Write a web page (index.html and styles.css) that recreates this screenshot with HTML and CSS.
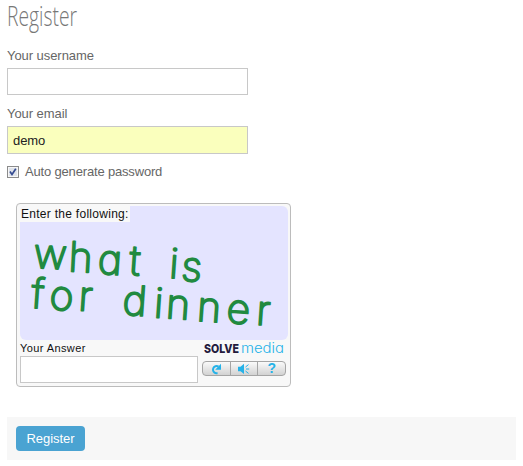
FILE: index.html
```html
<!DOCTYPE html>
<html lang="en">
<head>
<meta charset="utf-8">
<title>Register</title>
<link rel="stylesheet" href="styles.css">
</head>
<body>
<form class="register">
  <h1 class="title"><svg width="80" height="40" viewBox="0 0 80 40"><text x="0" y="26" textLength="70" lengthAdjust="spacingAndGlyphs">Register</text></svg></h1>
  <label class="label" for="username">Your username</label>
  <input class="field" id="username" type="text">
  <label class="label" for="email">Your email</label>
  <input class="field filled" id="email" type="text" value="demo">
  <label class="auto">
    <svg class="check" width="12" height="12" viewBox="0 0 12 12"><rect x=".5" y=".5" width="11" height="11" fill="#f7f7f7" stroke="#8b8b8b"/><rect x="2" y="2" width="8" height="8" fill="#dfe3ea"/><path d="M3 5.5 5 8.4 8.8 2.8" fill="none" stroke="#354b91" stroke-width="1.7"/></svg>
    <span>Auto generate password</span>
  </label>
  <section class="captcha">
    <div class="puzzle">
      <span class="prompt">Enter the following:</span>
      <svg class="phrase" width="268" height="134" viewBox="20 206 268 134">
        <g transform="translate(1 -.5) scale(1.05 1.06)">
          <text x="30.5 63.8 91.5 121.5" y="253 256.3 258.5 259.8" rotate="3 3 4 4">what</text>
          <text x="159.5 171" y="262.5 265" rotate="4">is</text>
          <text x="28 45.5 73" y="290.7 292.2 293.2" rotate="4">for</text>
          <text x="115 145 156.5 186 214 242.5" y="297.2 299.8 300.6 303 305 306.5" rotate="4">dinner</text>
        </g>
      </svg>
    </div>
    <div class="bottom">
      <div class="answer">
        <label for="answer">Your Answer</label>
        <input id="answer" type="text">
      </div>
      <div class="tools">
        <svg class="brand" width="82" height="16" viewBox="0 0 82 16"><text class="solve" x="2" y="13" textLength="35" lengthAdjust="spacingAndGlyphs">SOLVE</text><text class="media" x="39" y="13" textLength="43" lengthAdjust="spacingAndGlyphs">media</text></svg>
        <div class="buttons">
          <button type="button" aria-label="Refresh"><svg width="14" height="12" viewBox="0 0 14 12"><path d="M8.6 10.2H7A3.6 3.6 0 1 1 9.5 3.6" fill="none" stroke="#25b2e8" stroke-width="2"/><path d="M12 .8V6.8H6.2Z" fill="#25b2e8"/></svg></button>
          <button type="button" aria-label="Audio"><svg width="14" height="12" viewBox="0 0 14 12"><path d="M1 3.7H3.5L7 .8V11L3.5 8.2H1Z" fill="#25b2e8"/><path d="M8.5 4 11.5 1.6M9 6h3.2M8.5 8l3 2.4" fill="none" stroke="#25b2e8" stroke-width="1"/></svg></button>
          <button type="button" class="help">?</button>
        </div>
      </div>
    </div>
  </section>
  <div class="actions"><button class="submit" type="button">Register</button></div>
</form>
</body>
</html>
```
FILE: styles.css
```css
* { box-sizing: border-box; }
body { margin: 0; background: #fff; color: #666; font: 13px/16px "Liberation Sans", Arial, sans-serif; }
.register { display: flex; flex-direction: column; width: 516px; padding-left: 7px; }
.title { margin: 0; height: 48px; }
.title svg { display: block; overflow: visible; }
.title text { font: 300 28px "Open Sans", sans-serif; fill: #777; }
.label { height: 20px; letter-spacing: -.06px; }
.field { width: 241px; height: 27px; margin: 0 0 11px; padding: 0 5px; border: 1px solid #c8c8c8; background: #fff; color: #222; font: 13px "Liberation Sans", Arial, sans-serif; letter-spacing: -.1px; }
.filled { height: 28px; background: #faffbd; margin-bottom: 10px; }
.auto { display: flex; align-items: center; gap: 6px; height: 16px; letter-spacing: -.17px; }
.check { display: block; }
.captcha { width: 275px; height: 184px; margin: 23px 0 0 9px; padding: 2px 3px 3px; border: 1px solid #bcbcbc; border-radius: 4px; background: #f8f8f8; color: #111; }
.puzzle { display: grid; width: 268px; height: 134px; border-radius: 6px; background: #e4e4ff; overflow: hidden; }
.prompt, .phrase { grid-area: 1 / 1; }
.prompt { align-self: start; justify-self: start; width: 110px; height: 16px; padding-left: 1px; background: #f8f8f8; font-size: 12px; line-height: 16px; white-space: nowrap; letter-spacing: .28px; }
.phrase text { font: 200 39px Inter, sans-serif; font-feature-settings: "cv11"; fill: #218a40; stroke: #218a40; stroke-width: 1.7px; stroke-linejoin: round; }
.bottom { display: flex; gap: 4px; }
.answer { width: 178px; font-size: 11px; }
.answer label { display: block; height: 16px; line-height: 16px; letter-spacing: .4px; }
.answer input { display: block; width: 178px; height: 27px; margin: 0; border: 1px solid #c8c8c8; background: #fff; }
.tools { width: 84px; }
.brand { display: block; height: 16px; }
.solve { font: 800 12px Inter, sans-serif; fill: #241b3d; }
.media { font: 300 14px Inter, sans-serif; font-feature-settings: "cv11"; fill: #25b2e8; }
.buttons { display: flex; width: 84px; height: 15px; margin-top: 5px; border: 1px solid #a5a5a5; border-radius: 4px; background: linear-gradient(#fafafa, #d2d2d2); }
.buttons button { display: flex; flex: 1; align-items: center; justify-content: center; padding: 0; border: 0; background: none; }
.buttons button + button { border-left: 1px solid #a5a5a5; }
.buttons .help { color: #25b2e8; font: bold 14px/13px "Liberation Sans", Arial, sans-serif; }
.actions { width: 509px; height: 43px; margin-top: 30px; padding: 9px; background: #f7f7f7; }
.submit { display: block; width: 69px; height: 25px; padding: 0; border: 0; border-radius: 4px; background: #4aa3d2; color: #fff; font: 13px/25px "Liberation Sans", Arial, sans-serif; letter-spacing: -.05px; }
```
